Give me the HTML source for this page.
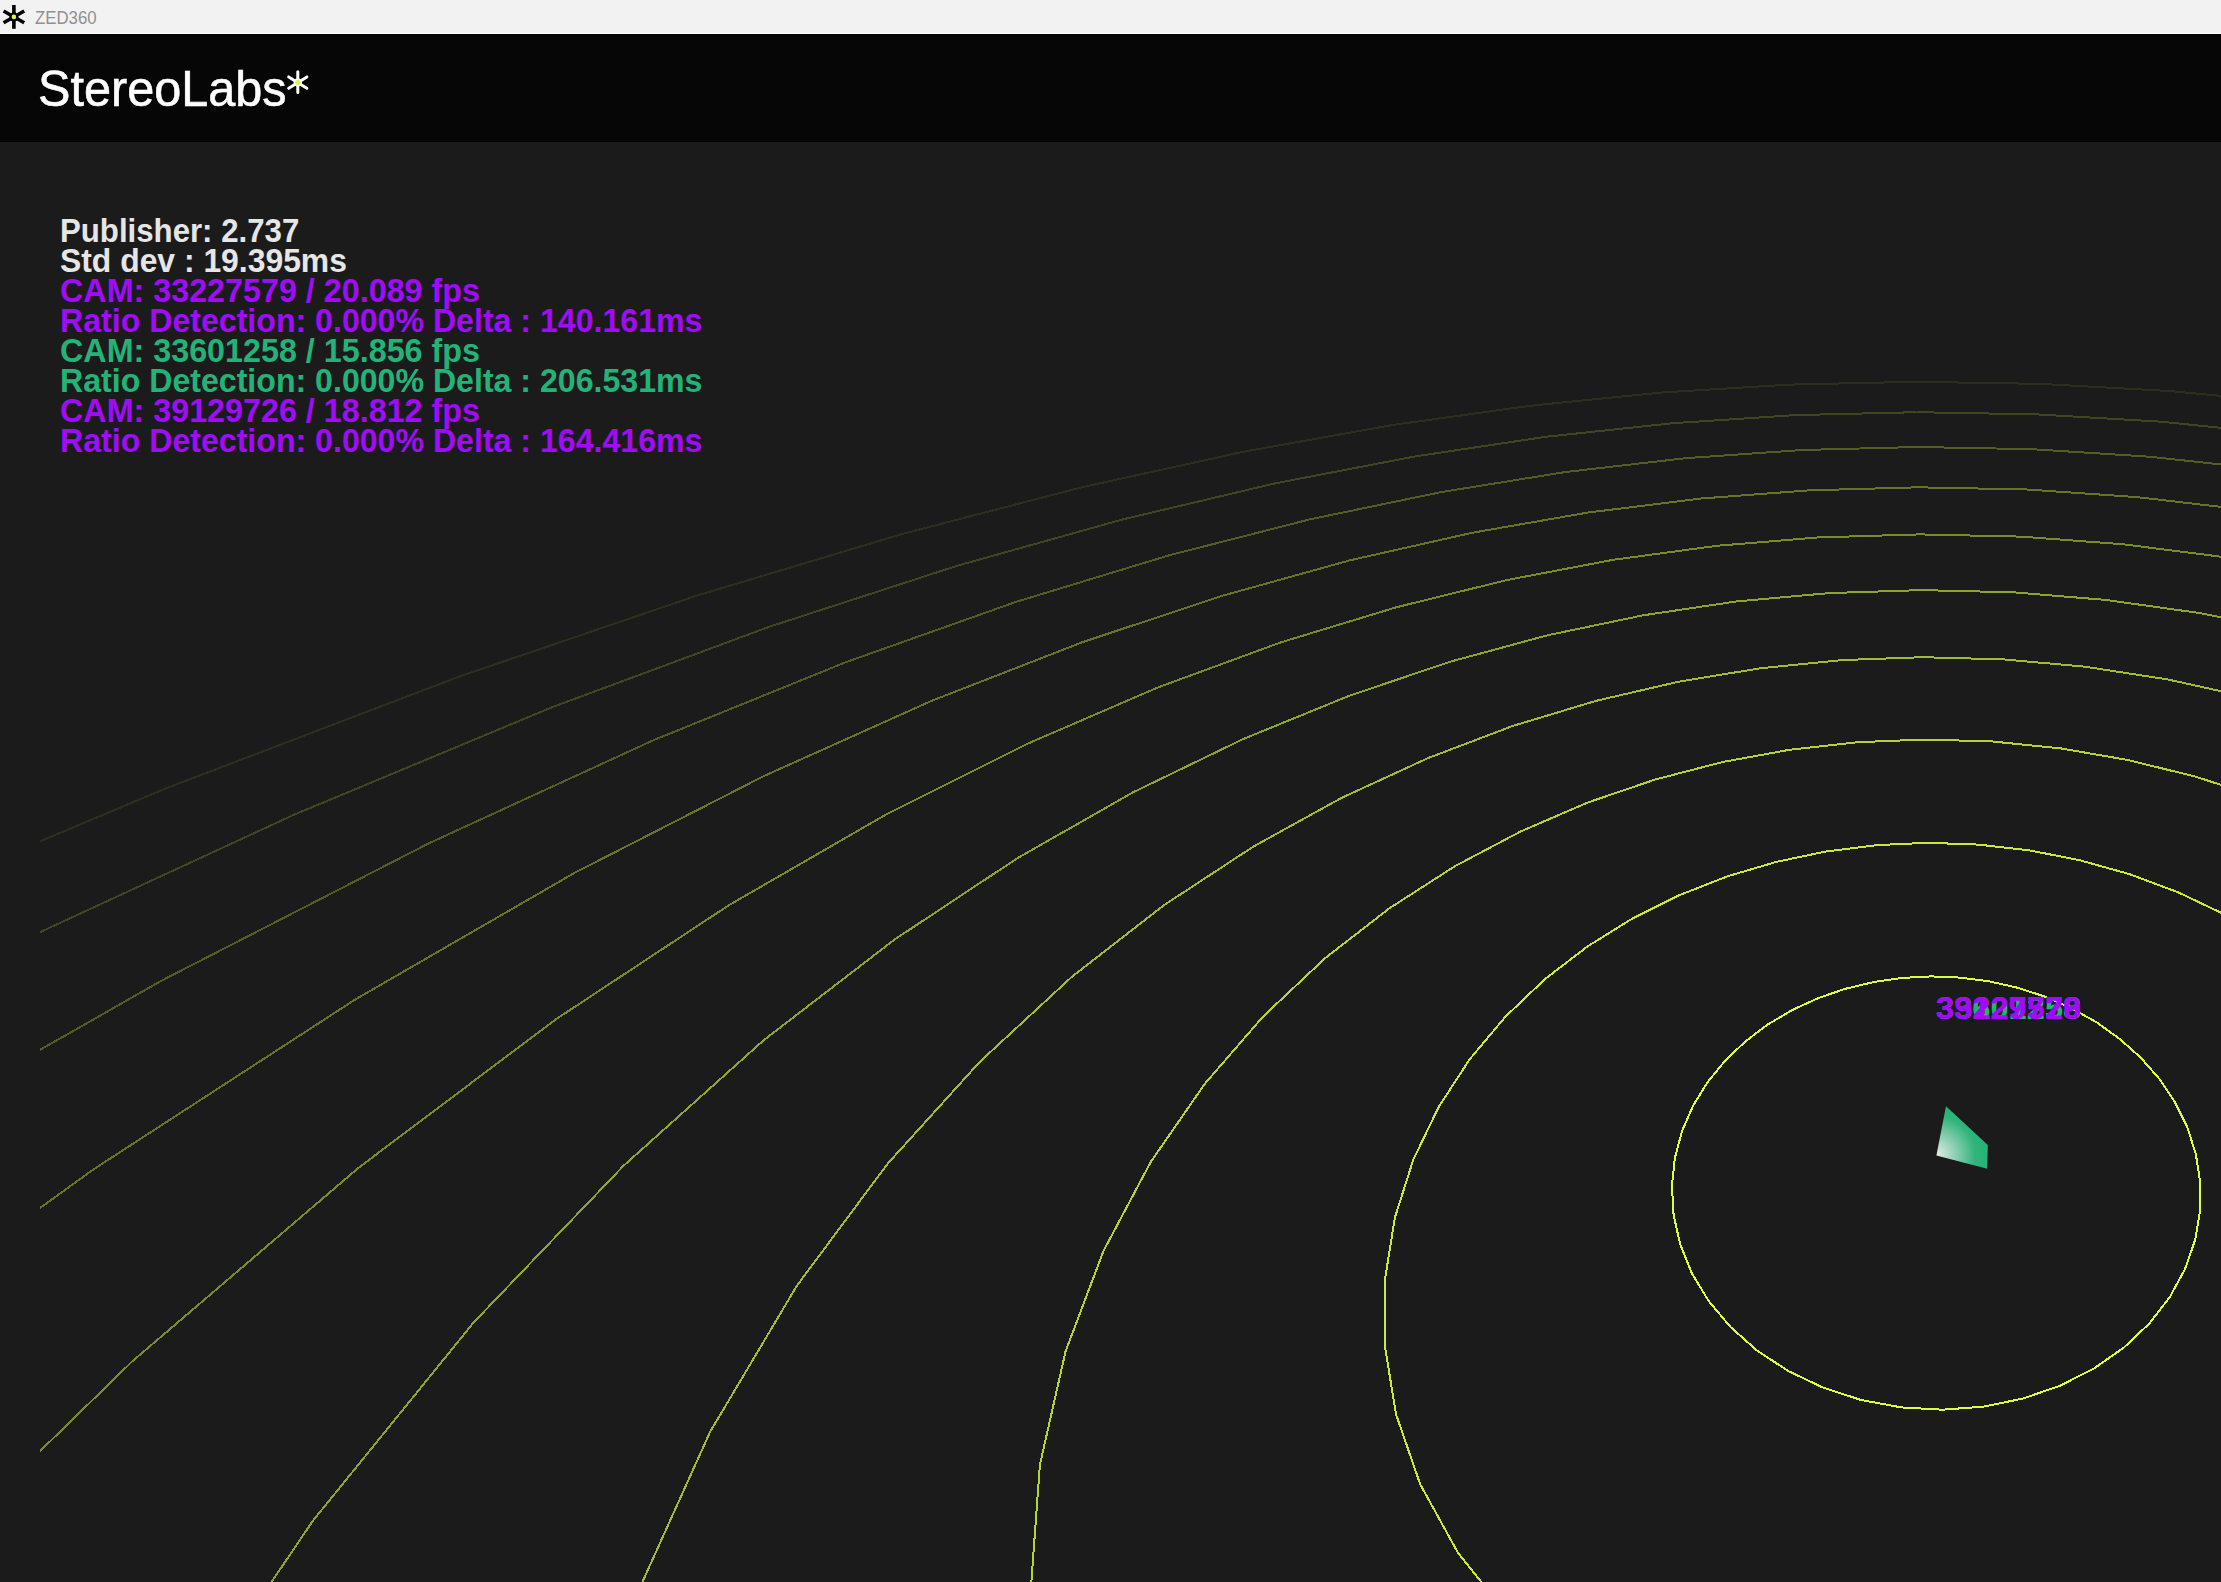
<!DOCTYPE html>
<html><head><meta charset="utf-8">
<style>
html,body{margin:0;padding:0;}
body{width:2221px;height:1582px;overflow:hidden;background:#1b1b1b;position:relative;font-family:"Liberation Sans",sans-serif;}
#tb{position:absolute;left:0;top:0;width:2221px;height:33px;background:#f2f2f2;}
#tbl{position:absolute;left:0;top:33px;width:2221px;height:1px;background:#fff;}
#hdr{position:absolute;left:0;top:34px;width:2221px;height:108px;background:#060606;border-top:1px solid #000;border-bottom:1px solid #030303;box-sizing:border-box;}
#ttl{position:absolute;left:35px;top:6px;font-size:18px;color:#909090;line-height:24px;white-space:nowrap;transform:scaleX(0.933);transform-origin:0 0;}
#logo{position:absolute;left:38px;top:59px;font-size:50px;color:#fff;-webkit-text-stroke:0.6px #fff;line-height:60px;white-space:nowrap;transform:scaleX(0.972);transform-origin:0 0;}
#grid{position:absolute;left:0;top:142px;}
.st{position:absolute;left:60px;font-weight:bold;font-size:32.5px;line-height:30px;white-space:nowrap;transform-origin:0 0;}
.lb{position:absolute;left:1936px;top:993px;transform:scaleX(1.02);transform-origin:0 0;font-weight:bold;font-size:32px;line-height:30px;white-space:nowrap;}
.w{color:#e6e6e6}.p{color:#a00cf8}.g{color:#23b378}
</style></head><body>
<div id="tb"></div><div id="tbl"></div>
<svg style="position:absolute;left:0;top:0" width="30" height="33" viewBox="0 0 30 33">
<g stroke="#000" stroke-width="3.6" stroke-linecap="butt">
<line x1="13.9" y1="5" x2="13.9" y2="28.8"/>
<line x1="3.6" y1="11" x2="24.2" y2="22.8"/>
<line x1="3.6" y1="22.8" x2="24.2" y2="11"/>
</g><circle cx="13.9" cy="16.9" r="4.6" fill="#000"/><circle cx="13.9" cy="16.9" r="2.3" fill="#d4ff3c"/></svg>
<div id="ttl">ZED360</div>
<div id="hdr"></div>
<div id="logo">StereoLabs</div>
<svg style="position:absolute;left:280px;top:64px" width="36" height="36" viewBox="280 64 36 36">
<g stroke="#fff" stroke-width="3" stroke-linecap="round">
<line x1="297.8" y1="71.8" x2="297.8" y2="92.4"/>
<line x1="288.7" y1="76.9" x2="306.9" y2="88.3"/>
<line x1="288.7" y1="88.3" x2="306.9" y2="76.9"/>
</g><circle cx="297.8" cy="82.4" r="4.2" fill="#fff"/><circle cx="297.8" cy="82.4" r="2.5" fill="#d4f83a"/></svg>
<svg id="grid" width="2221" height="1440" viewBox="0 142 2221 1440"><defs><clipPath id="vc"><rect x="40" y="142" width="2181" height="1440"/></clipPath></defs><g clip-path="url(#vc)" fill="none" stroke-width="2" shape-rendering="crispEdges"><path d="M1931.1,976.4 L1960.2,977.6 L1989.0,981.3 L2017.4,987.7 L2044.9,996.6 L2071.4,1008.2 L2096.4,1022.2 L2119.6,1038.8 L2140.7,1057.7 L2159.3,1078.8 L2174.9,1102.1 L2187.3,1127.2 L2195.8,1154.0 L2200.2,1182.0 L2200.1,1210.8 L2195.1,1240.0 L2185.1,1268.9 L2169.9,1296.9 L2149.5,1323.3 L2124.1,1347.4 L2094.1,1368.4 L2060.1,1385.7 L2022.8,1398.6 L1983.2,1406.7 L1942.3,1409.7 L1901.3,1407.4 L1861.2,1400.0 L1823.2,1387.7 L1788.2,1371.0 L1757.0,1350.5 L1730.3,1326.8 L1708.4,1300.7 L1691.7,1272.9 L1680.1,1244.0 L1673.6,1214.9 L1671.9,1185.9 L1674.9,1157.8 L1682.1,1130.9 L1693.2,1105.5 L1707.7,1082.0 L1725.3,1060.5 L1745.5,1041.3 L1767.9,1024.4 L1792.3,1010.0 L1818.2,998.1 L1845.3,988.8 L1873.4,982.1 L1902.1,977.9 L1931.1,976.4" stroke="#d8ff40"/><path d="M1927.6,842.8 L1978.4,844.6 L2029.0,850.3 L2079.3,860.1 L2129.0,874.0 L2177.9,892.2 L2225.5,914.9 L2271.4,942.1 L2315.3,974.0 L2356.4,1010.9 L2394.0,1052.8 L2427.3,1099.9 L2455.1,1152.1 L2476.2,1209.2 L2489.3,1270.9 L2492.8,1336.5 L2485.2,1404.9 L2464.9,1474.6 L2430.9,1543.8 L2382.3,1609.9 L2319.0,1670.2 L2241.9,1721.6 L2152.9,1761.2 L2055.1,1786.6 L1952.3,1796.0 L1849.0,1788.9 L1749.6,1765.6 L1658.1,1727.8 L1577.8,1677.9 L1510.8,1618.6 L1458.2,1553.2 L1420.2,1484.3 L1396.1,1414.5 L1384.8,1345.8 L1384.9,1279.8 L1394.9,1217.5 L1413.3,1159.7 L1438.7,1106.9 L1469.8,1059.1 L1505.6,1016.5 L1545.2,978.9 L1587.7,946.3 L1632.6,918.4 L1679.3,895.2 L1727.5,876.3 L1776.6,861.8 L1826.5,851.4 L1876.9,845.1 L1927.6,842.8" stroke="#c7ea3d"/><path d="M1925.0,739.5 L1992.5,741.5 L2060.2,748.3 L2127.9,760.0 L2195.8,776.7 L2263.6,798.8 L2331.4,826.7 L2398.9,860.9 L2465.8,901.9 L2531.5,950.5 L2595.5,1007.5 L2656.6,1073.7 L2713.6,1150.1 L2764.5,1237.6 L2807.0,1336.9 L2837.8,1448.3 L2853.1,1571.6 L2848.3,1705.6 L2818.2,1847.2 L2757.9,1991.9 L2663.3,2132.3 L2532.8,2259.2 L2368.4,2361.8 L2176.9,2429.9 L1969.4,2455.7 L1760.3,2436.1 L1564.1,2373.4 L1392.6,2274.9 L1253.6,2150.7 L1150.0,2011.6 L1080.9,1867.1 L1042.8,1724.7 L1030.8,1589.5 L1039.9,1464.7 L1065.5,1351.6 L1103.6,1250.7 L1150.9,1161.7 L1204.8,1083.8 L1263.4,1016.2 L1325.3,958.0 L1389.4,908.3 L1454.9,866.2 L1521.2,831.2 L1588.1,802.4 L1655.3,779.5 L1722.6,762.0 L1790.0,749.7 L1857.5,742.2 L1925.0,739.5" stroke="#b3d339"/><path d="M1922.8,657.2 L2003.8,659.4 L2085.1,666.7 L2167.1,679.3 L2250.0,697.6 L2334.2,721.9 L2420.0,753.0 L2507.4,791.7 L2596.8,839.1 L2688.1,896.5 L2781.3,965.7 L2876.0,1048.7 L2971.3,1148.2 L3066.0,1267.4 L3157.7,1409.7 L3242.6,1579.5 L3315.1,1781.0 L3366.6,2017.7 L3385.1,2291.3 L3354.8,2598.8 L3256.8,2928.9 L3073.3,3258.1 L2794.3,3549.1 L2427.8,3755.8 L2005.2,3837.1 L1576.9,3774.9 L1194.8,3583.1 L894.6,3300.8 L688.8,2974.4 L570.4,2642.8 L522.7,2331.5 L527.3,2053.0 L567.9,1811.4 L631.9,1605.3 L710.3,1431.5 L796.9,1285.7 L887.7,1163.6 L980.0,1061.6 L1072.2,976.5 L1163.5,905.5 L1253.3,846.6 L1341.5,797.9 L1428.0,758.1 L1512.9,725.9 L1596.6,700.7 L1679.1,681.6 L1760.8,668.2 L1841.9,660.1 L1922.8,657.2" stroke="#a0bb35"/><path d="M1921.1,590.1 L2013.0,592.3 L2105.5,599.9 L2199.3,613.0 L2295.0,632.0 L2393.3,657.6 L2495.0,690.6 L2600.9,732.2 L2711.9,783.9 L2829.0,848.0 L2953.3,927.0 L3086.0,1024.8 L3228.3,1146.4 L3381.6,1298.5 L3546.7,1490.6 L3724.1,1735.6 L3912.2,2051.6 L4106.1,2463.2 L4294.0,3003.4 L4450.0,3712.5 L4523.4,4628.8 L4426.0,5758.0 L4033.4,7003.0 L3245.8,8078.4 L2127.5,8555.9 L972.4,8186.6 L100.8,7166.4 L-378.2,5923.1 L-542.2,4769.6 L-514.1,3823.8 L-387.7,3088.9 L-219.1,2528.5 L-37.9,2101.6 L141.5,1774.4 L312.8,1520.9 L473.6,1322.5 L623.7,1165.6 L763.6,1040.3 L894.5,939.6 L1017.4,858.2 L1133.3,792.2 L1243.5,738.9 L1348.7,696.0 L1449.9,661.8 L1547.8,635.2 L1643.2,615.3 L1736.8,601.4 L1829.2,593.1 L1921.1,590.1" stroke="#8ca431"/><path d="M1919.6,534.4 L2020.6,536.6 L2122.5,544.2 L2226.3,557.4 L2332.9,576.7 L2443.6,602.9 L2559.5,636.9 L2682.4,680.3 L2813.9,735.1 L2956.4,804.1 L3112.9,891.1 L3287.2,1001.9 L3484.5,1144.5 L3712.2,1331.1 L3980.8,1580.7 L4306.3,1924.3 L4713.9,2414.9 L5247.3,3150.5 L5988.4,4330.8 L7114.9,6422.4 L9107.9,10781.6 L13954.1,23366.1 L57342.7,155601.9 L3796732.5,12251006.7 M-3477379.9,12253335.9 L-114130.1,381344.9 L-10574.9,26930.1 L-5312.4,11726.0 L-3270.8,6825.9 L-2136.9,4544.3 L-1396.2,3278.3 L-864.6,2497.8 L-458.8,1981.3 L-135.0,1621.6 L132.2,1361.4 L358.9,1167.5 L555.3,1019.7 L728.9,905.2 L884.8,815.2 L1026.9,744.0 L1158.0,687.4 L1280.5,642.5 L1396.2,607.3 L1506.7,580.1 L1613.2,559.8 L1716.9,545.8 L1818.7,537.4 L1919.6,534.4" stroke="#798c2d"/><path d="M1918.4,487.3 L2027.1,489.5 L2136.9,497.1 L2249.2,510.2 L2365.3,529.5 L2486.8,555.8 L2615.5,590.3 L2753.9,634.7 L2904.8,691.5 L3072.2,764.1 L3261.4,857.7 L3480.1,979.9 L3740.0,1142.6 L4059.1,1365.3 L4468.3,1682.0 L5024.5,2157.2 L5847.3,2928.6 L7238.9,4350.2 L10260.7,7677.9 L23258.7,22838.3 L10223226.8,12248948.8 M-9846788.7,12255375.5 L-24596.6,30050.3 L-6875.3,8486.5 L-3528.1,4636.3 L-2060.3,3070.8 L-1210.9,2240.6 L-643.3,1736.0 L-228.7,1402.5 L93.3,1169.5 L354.6,999.9 L574.3,873.0 L764.0,776.0 L931.7,700.8 L1082.7,642.1 L1221.2,596.1 L1350.0,560.3 L1471.6,532.9 L1587.7,512.6 L1700.0,498.6 L1809.8,490.3 L1918.4,487.3" stroke="#66752a"/><path d="M1917.4,447.0 L2032.6,449.2 L2149.2,456.7 L2268.9,469.6 L2393.2,488.7 L2524.3,514.9 L2664.6,549.5 L2817.2,594.4 L2986.4,652.4 L3177.8,727.7 L3399.9,826.6 L3665.4,958.8 L3994.7,1140.7 L4423.4,1401.2 L5019.5,1796.5 L5932.9,2451.6 L7571.8,3710.1 L11596.3,6974.8 L41704.0,32311.6 L14408902.2,12247608.5 M-14053597.3,12256722.6 L-67220.9,58692.6 L-8569.7,7847.7 L-3942.7,3972.8 L-2180.6,2574.8 L-1225.3,1866.9 L-610.9,1446.1 L-173.2,1171.4 L161.1,980.9 L429.5,843.0 L653.5,740.2 L846.1,662.1 L1016.0,601.9 L1169.2,555.3 L1309.8,519.4 L1441.2,492.1 L1565.7,472.0 L1685.5,458.2 L1802.2,450.0 L1917.4,447.0" stroke="#525e26"/><path d="M1916.5,412.2 L2037.4,414.4 L2159.9,421.6 L2286.0,434.4 L2417.6,453.2 L2557.3,479.0 L2708.0,513.4 L2873.7,558.4 L3060.0,617.1 L3274.7,694.3 L3529.5,797.4 L3843.3,938.5 L4248.6,1138.8 L4806.4,1439.0 L5648.0,1927.1 L7118.4,2835.9 L10513.0,5043.0 L28703.1,17278.9 L17988174.4,12246462.4 M-17622157.3,12257865.3 L-35272.5,24856.9 L-7342.2,5601.8 L-3478.1,3022.1 L-1898.1,2018.2 L-1016.4,1492.3 L-440.4,1173.4 L-25.6,962.5 L293.8,814.8 L551.9,707.3 L768.7,627.0 L956.4,566.0 L1123.2,519.3 L1274.5,483.5 L1414.7,456.5 L1546.6,436.7 L1672.9,423.2 L1795.6,415.1 L1916.5,412.2" stroke="#3f4622"/><path d="M1915.7,381.8 L2041.5,383.9 L2169.3,391.0 L2301.0,403.4 L2439.1,421.9 L2586.4,447.3 L2746.5,481.3 L2924.4,526.1 L3126.8,585.1 L3363.7,663.6 L3650.9,770.1 L4014.4,919.0 L4501.8,1137.0 L5209.7,1478.8 L6371.2,2077.3 L8730.4,3358.5 L16660.2,7828.8 L21316766.9,12245396.5 M-20924492.7,12258922.7 L-15329.5,9429.3 L-5303.7,3651.4 L-2684.9,2195.2 L-1447.4,1541.4 L-708.4,1175.4 L-205.8,944.7 L166.1,788.3 L458.3,676.9 L698.4,595.1 L902.9,533.8 L1082.2,487.2 L1243.3,451.8 L1391.3,425.2 L1529.8,405.8 L1661.9,392.5 L1789.8,384.6 L1915.7,381.8" stroke="#2c2f1e"/></g></svg>
<svg style="position:absolute;left:1900px;top:1090px" width="100" height="100" viewBox="1900 1090 100 100">
<defs><radialGradient id="cg" gradientUnits="userSpaceOnUse" cx="1936.4" cy="1155.4" r="52"><stop offset="0" stop-color="#e6ece8"/><stop offset="0.75" stop-color="#30b47c"/><stop offset="1" stop-color="#25b276"/></radialGradient></defs>
<polygon points="1946,1106.2 1987.8,1144.9 1987.2,1168.7 1936.4,1155.4" fill="url(#cg)"/></svg>
<div class="lb g">33601258</div>
<div class="lb p">33227579</div>
<div class="lb p">39129726</div>
<div class="st w" style="top:216px;transform:scaleX(0.9597)">Publisher: 2.737</div>
<div class="st w" style="top:246px;transform:scaleX(0.9804)">Std dev : 19.395ms</div>
<div class="st p" style="top:276px;transform:scaleX(0.9934)">CAM: 33227579 / 20.089 fps</div>
<div class="st p" style="top:306px;transform:scaleX(0.9880)">Ratio Detection: 0.000% Delta : 140.161ms</div>
<div class="st g" style="top:336px;transform:scaleX(0.9934)">CAM: 33601258 / 15.856 fps</div>
<div class="st g" style="top:366px;transform:scaleX(0.9880)">Ratio Detection: 0.000% Delta : 206.531ms</div>
<div class="st p" style="top:396px;transform:scaleX(0.9934)">CAM: 39129726 / 18.812 fps</div>
<div class="st p" style="top:426px;transform:scaleX(0.9880)">Ratio Detection: 0.000% Delta : 164.416ms</div>
</body></html>
